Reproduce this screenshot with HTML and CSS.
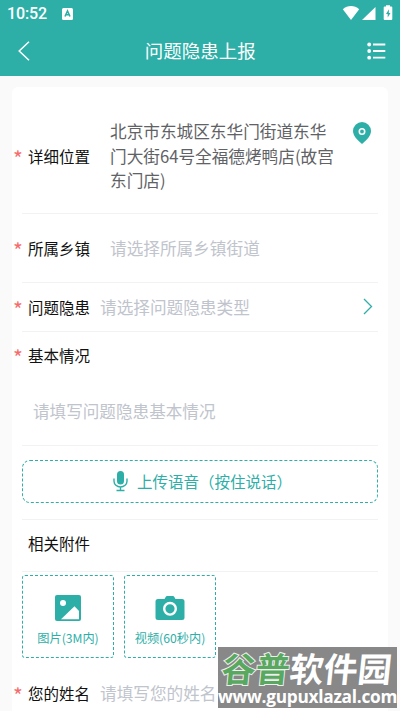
FILE: index.html
```html
<!DOCTYPE html>
<html lang="zh-CN">
<head>
<meta charset="utf-8">
<meta name="viewport" content="width=device-width, initial-scale=1">
<title>问题隐患上报</title>
<link rel="stylesheet" href="styles.css">
</head>
<body>
<header class="header">
  <div class="status">
    <span class="time">10:52</span>
    <svg class="app-badge" width="11" height="12" viewBox="0 0 11 12"><rect width="11" height="12" rx="1.500" fill="#fff"/><path d="M3 8.500 5.500 3 8 8.500M4 6.800h3" fill="none" stroke="#2dafa8" stroke-width="1.600"/></svg>
    <svg class="signals" width="52" height="17" viewBox="0 0 52 17"><path d="M.8 4.200C5.500-.1 12.500-.1 17.200 4.200L9 15Z" fill="#fff"/><path d="M33.500 2v13H20Z" fill="#fff"/><path d="M44 1.500V.3h4v1.200h1.300q1 0 1 1V14q0 1-1 1h-6.600q-1 0-1-1V2.500q0-1 1-1Z" fill="#fff"/><path d="M47 4.300 44 9h1.700v3.500L48.500 8h-1.700Z" fill="#2dafa8"/></svg>
  </div>
  <div class="navbar">
    <svg class="back" width="12" height="20" viewBox="0 0 12 20"><path d="M11 .8 1.200 10 11 19.200" fill="none" stroke="#fff" stroke-width="1.500"/></svg>
    <h1 class="title">问题隐患上报</h1>
    <svg class="menu" width="19" height="18" viewBox="0 0 19 18" fill="#fff"><circle cx="2.200" cy="2.500" r="1.900"/><circle cx="2.200" cy="9" r="1.900"/><circle cx="2.200" cy="15.700" r="1.900"/><path d="M6 2.500h12.300M6 9h12.300M6 15.700h12.300" stroke="#fff" stroke-width="1.800"/></svg>
  </div>
</header>
<main class="card">
  <section class="row row-address">
    <span class="label required">详细位置</span>
    <p class="value address">北京市东城区东华门街道东华门大街64号全福德烤鸭店(故宫东门店)</p>
    <svg class="pin" width="18" height="22" viewBox="0 0 18 22"><path d="M9 0a9 9 0 0 1 9 9c0 5-4.500 9-9 13C4.500 18 0 14 0 9a9 9 0 0 1 9-9Z" fill="#2dafa8"/><circle cx="9" cy="9.500" r="2.700" fill="none" stroke="#fff" stroke-width="1.600"/></svg>
  </section>
  <section class="row row-town">
    <span class="label required">所属乡镇</span>
    <span class="value placeholder">请选择所属乡镇街道</span>
  </section>
  <section class="row row-type">
    <span class="label required">问题隐患</span>
    <span class="value placeholder">请选择问题隐患类型</span>
    <svg class="chevron" width="10" height="17" viewBox="0 0 10 17"><path d="M1 1 8.500 8.500 1 16" fill="none" stroke="#2dafa8" stroke-width="1.300"/></svg>
  </section>
  <section class="row row-detail">
    <span class="label required">基本情况</span>
    <span class="placeholder detail">请填写问题隐患基本情况</span>
  </section>
  <section class="row row-voice">
    <div class="voice">
      <svg class="mic" width="15" height="21" viewBox="0 0 15 21"><rect x="4" y="0" width="7" height="13.500" rx="3.500" fill="#2dafa8"/><path d="M1 7.500v2.800a6.500 5.700 0 0 0 13 0V7.500M7.500 16v3.500M3.500 19.500h8" fill="none" stroke="#2dafa8" stroke-width="1.400"/></svg>
      <span>上传语音（按住说话）</span>
    </div>
  </section>
  <section class="row row-files"><span class="label">相关附件</span></section>
  <section class="uploads">
    <div class="upload">
      <svg width="28" height="28" viewBox="0 0 28 28"><rect x="1" y="1" width="26" height="26" rx="2" fill="#2dafa8"/><circle cx="9" cy="9" r="3" fill="#fff"/><path d="M7 25.300 20.500 12.300 25 17v8.300Z" fill="#fff"/></svg>
      <span>图片(3M内)</span>
    </div>
    <div class="upload">
      <svg width="30" height="28" viewBox="0 0 30 28"><path d="M3 5h6.500l1.300-2.300q.4-.7 1.200-.7h6q.8 0 1.200.7L20.500 5H27q2.500 0 2.500 2.500v16Q29.500 26 27 26H3Q.5 26 .5 23.500v-16Q.5 5 3 5Z" fill="#2dafa8"/><circle cx="15" cy="14.800" r="5.800" fill="none" stroke="#fff" stroke-width="2.400"/></svg>
      <span>视频(60秒内)</span>
    </div>
  </section>
  <section class="row row-name">
    <span class="label required">您的姓名</span>
    <span class="value placeholder">请填写您的姓名</span>
  </section>
</main>
<aside class="watermark">
  <div class="brand"><span class="brand-green">谷普</span><span>软件园</span></div>
  <div class="site">www.gupuxlazal.com</div>
</aside>
</body>
</html>
```

FILE: styles.css
```css
* { box-sizing: border-box; }
html, body { margin: 0; height: 711px; overflow: hidden; }
body {
  position: relative;
  background: #fafafa;
  color: #111;
  font-family: "Noto Sans CJK SC", sans-serif;
  font-size: 15.5px;
}
svg { display: block; flex: none; }
.header { height: 75.5px; background: #2dafa8; color: #fff; }
.status {
  height: 27px;
  padding: 1px 6px 0 7px;
  display: flex;
  align-items: center;
}
.time { font: 500 16px/20px Roboto, sans-serif; width: 55px; letter-spacing: -.1px; }
.signals { margin-left: auto; margin-top: -1px; }
.navbar {
  height: 48px;
  padding: 0 13.5px 0 18px;
  display: flex;
  align-items: center;
  justify-content: space-between;
}
.title {
  margin: -3px 0 0 3px;
  font-size: 18.5px;
  font-weight: 400;
  line-height: 28px;
}
.card {
  margin: 11.5px 12px 0;
  height: 640px;
  padding: 12px 10px 0;
  background: #fff;
  border-radius: 6px;
}
.row {
  display: flex;
  align-items: center;
  border-bottom: 1px solid #f1f2f3;
}
.label { position: relative; top: -.5px; width: 78px; padding-left: 6px; line-height: 24px; white-space: nowrap; }
.required::before {
  content: "*";
  position: absolute;
  left: -9px;
  top: 2px;
  color: #f56c6c;
  font-size: 21px;
}
.value { font-size: 16.65px; line-height: 24.5px; white-space: nowrap; }
.placeholder { color: #c0c4cc; }
.row-address { height: 115px; }
.address { width: 227px; margin: 0 0 0 10px; white-space: normal; color: #606266; }
.pin { margin: 0 0 47px 16px; }
.row-town { height: 69px; }
.row-town .value { margin-left: 10px; }
.row-type { height: 49px; }
.chevron { margin: 0 5px 2px auto; }
.row-detail { height: 114px; flex-direction: column; align-items: flex-start; padding-top: 11.5px; }
.detail { margin: 31px 0 0 11px; font-size: 16.6px; line-height: 25px; }
.row-voice { height: 74px; padding-bottom: 2px; }
.voice {
  flex: 1;
  height: 43px;
  display: flex;
  align-items: center;
  justify-content: center;
  gap: 9px;
  border: 1px dashed #2dafa8;
  border-radius: 8px;
  color: #2dafa8;
}
.voice span { margin: -1px -5px 0 0; }
.row-files { height: 52px; padding-bottom: 5px; }
.uploads { display: flex; gap: 10px; padding-top: 3px; }
.upload {
  width: 92px;
  height: 83px;
  padding-top: 18px;
  display: flex;
  flex-direction: column;
  align-items: center;
  gap: 7px;
  border: 1px dashed #2dafa8;
  border-radius: 3px;
  color: #2dafa8;
  font-size: 12.2px;
  line-height: 18px;
}
.row-name { height: 70px; border: 0; }
.watermark {
  position: absolute;
  left: 218px;
  top: 647px;
  width: 179px;
  height: 61px;
  background: #888;
  color: #fff;
}
.brand {
  height: 41px;
  padding-left: 4px;
  font-size: 34px;
  font-weight: 700;
  line-height: 41px;
  white-space: nowrap;
  transform: skewX(-6deg);
}
.brand-green { color: #58a85f; -webkit-text-stroke: 2px #eee; paint-order: stroke fill; }
.site { font: 700 17.3px/17px "Open Sans", sans-serif; letter-spacing: -.27px; white-space: nowrap; }
```
